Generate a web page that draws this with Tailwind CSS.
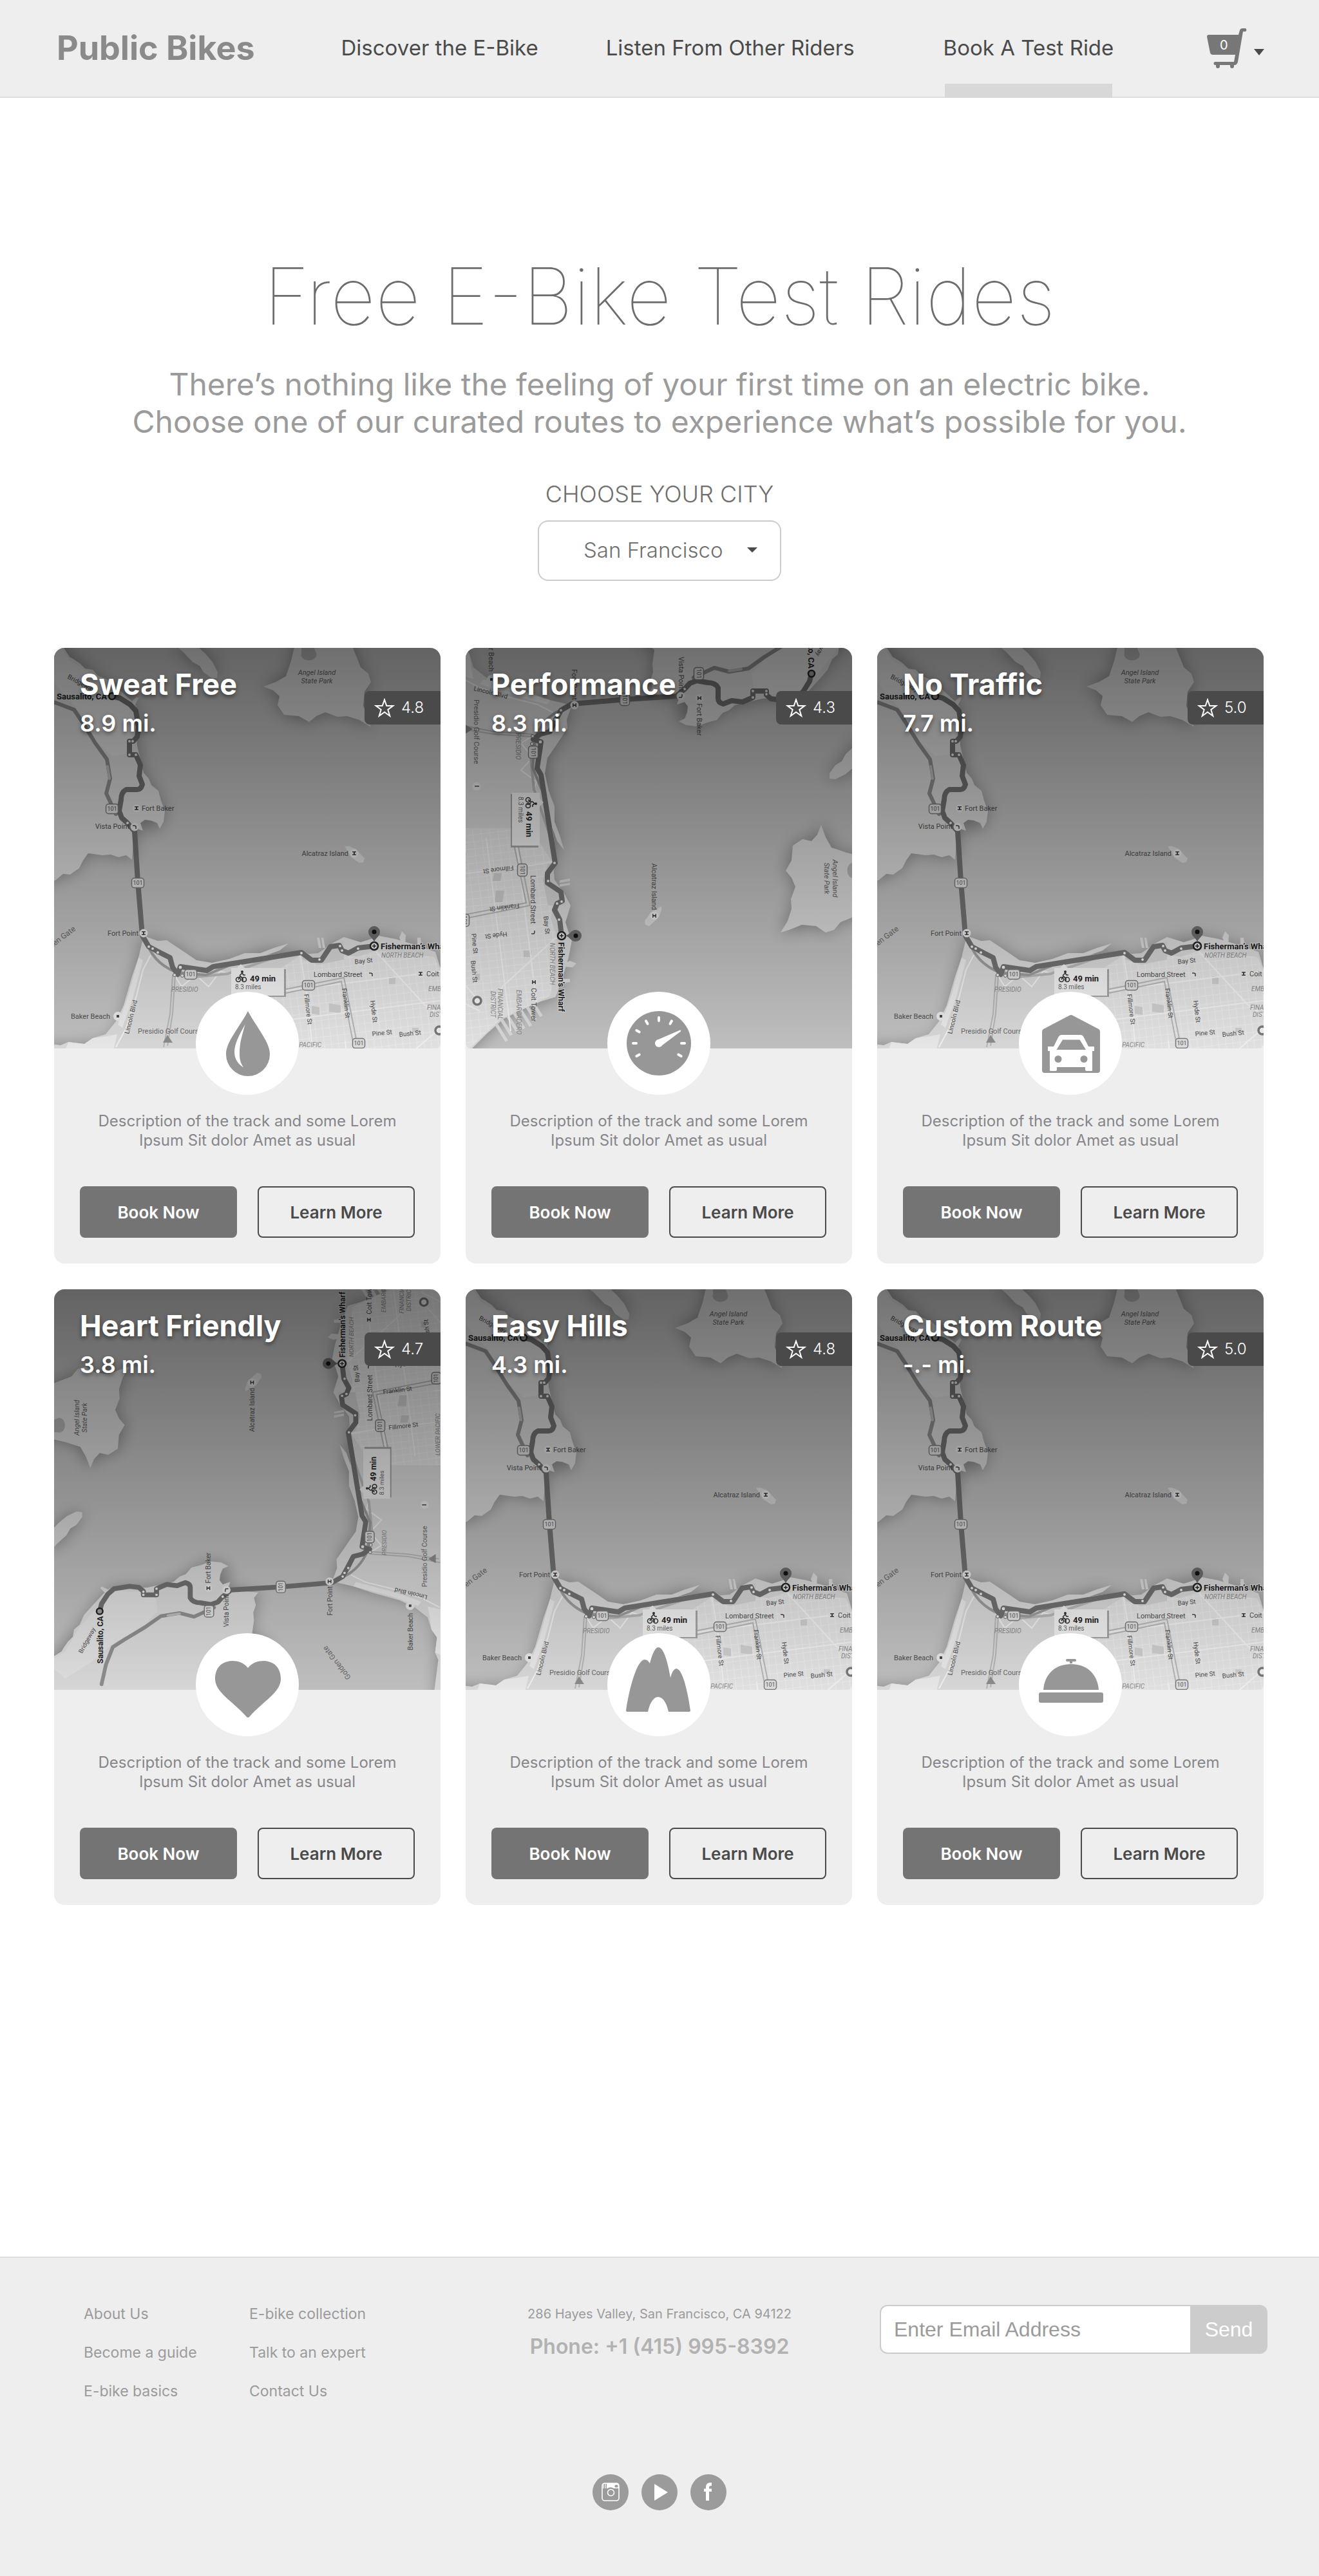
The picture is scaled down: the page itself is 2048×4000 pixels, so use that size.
<!DOCTYPE html>
<html lang="en">
<head>
<meta charset="utf-8">
<meta name="viewport" content="width=device-width, initial-scale=1">
<title>Public Bikes – Free E-Bike Test Rides</title>
<script src="https://cdn.jsdelivr.net/npm/@tailwindcss/browser@4"></script>
</head>
<body class="flex min-h-screen flex-col bg-white font-['Inter',sans-serif]">

<!-- Shared filters, patterns and the rating star -->
<svg class="absolute size-0" aria-hidden="true">
  <defs>
    <filter id="shore" x="-20%" y="-20%" width="140%" height="140%"><feGaussianBlur stdDeviation="12"/></filter>
    <pattern id="streets" width="11" height="13" patternUnits="userSpaceOnUse" patternTransform="rotate(-7)">
      <path d="M0 0H11M0 0V13" stroke="#ebebeb" stroke-width="1.6" fill="none"/>
    </pattern>
    <symbol id="star" viewBox="0 0 32 30"><path d="M16 2.500l3.300 9.500h10l-8 6 3 9.700-8.300-5.900-8.300 5.900 3-9.700-8-6h10z" fill="none" stroke="#fff" stroke-width="2"/></symbol>
    <symbol id="shield" viewBox="0 0 22 18"><rect x="1.500" y="1.500" width="19" height="15" rx="4" fill="#dcdcdc" stroke="#777" stroke-width="1.500"/></symbol>
  </defs>
</svg>

<!-- Route map artwork, copied into every card -->
<template id="map-art">
  <svg>
    <rect x="-60" y="-40" width="780" height="720" fill="#bebebe"/>
    <g filter="url(#shore)" fill="#000" opacity=".3">
      <path d="M188 0L215 22 239 43 253 47 251 26 235 9 219-10z"/>
      <path d="M372 3L364 39 325 60 349 74 347 89 357 104 396 115 421 100 455 106 492 123 482 68 492 53 476 30 464 0 455-24 380-24z"/>
      <path d="M15 0L68 43 121 83 131 106 129 152 139 194 151 213 166 237 172 253 164 281 129 281 121 329 88 321 53 319 39 342 2 361-60 365V-40H0z"/>
      <path d="M139 447L161 455 190 464 221 485 272 483 341 466 408 481 435 457 504 447 557 460 592 472 599 495 626 553 672 602 720 640V690H-60V612L10 617 47 615 80 611 96 594 108 569 121 518 131 481z"/>
    </g>
    <g fill="#d6d6d6">
      <path d="M188-4L200 6 215 22 226 28 232 38 245 47 253 47 254 38 246 22 235 9 224-1 219-10z"/>
      <path d="M372 3L368 20 360 44 344 53 325 60 340 66 350 75 347 89 357 104 380 106 396 115 407 106 421 100 440 107 455 106 474 112 492 123 488 110 480 90 482 68 492 53 488 40 476 30 464 0 455-24 380-24z"/>
      <path d="M451 308L458 308 468 312 482 327 480 333 474 334 461 325z"/>
      <path d="M0-40L15 0 24 14 31 18 40 24 48 32 60 34 68 43 84 50 98 62 121 83 128 76 131 78 125 90 131 106 127 120 129 152 139 194 147 203 151 213 162 222 166 237 172 253 170 270 164 281 160 272 150 268 141 267 134 272 138 284 129 281 124 290 121 329 112 322 100 325 88 321 75 322 53 319 45 330 39 342 25 352 14 351 2 361-60 370V-40z"/>
      <path d="M139 447L161 455 175 454 190 464 205 474 221 485 245 489 272 483 296 474 320 474 341 466 364 459 350 470 330 477 384 470 408 481 420 475 425 462 435 457 450 449 476 457 492 452 504 447 530 452 557 460 592 472 599 495 610 520 626 553 650 580 672 602 720 640V690H-60V608L-30 612 10 617 22 612 47 615 60 606 80 600 96 580 108 555 121 510 131 481z"/>
      <path d="M541 462L536 450 540 440 546 446 545 462zM564 464V450H569L571 466zM411 466L408 450H412L415 466zM417 466L415 450H418L421 466z"/>
      <g transform="rotate(-32 620 540)"><path d="M612 500h34v5h-34zM612 511h34v5h-34zM612 522h38v5h-38zM612 533h36v5h-36zM612 544h34v5h-34zM612 555h34v5h-34zM612 566h38v5h-38z"/></g>
    </g>
    <g fill="#e6e6e6">
      <path d="M5-10L24 20 60 40 105 78 128 90 122 120 122 150 110 165 90 168 60 140 40 100 5 60-20 20z" opacity=".45"/>
      <path d="M47 615L60 606 82 603 98 600 92 625 70 645H10L22 612z"/>
      <path d="M131 481L115 540 99 585 106 590 122 545 138 485z"/>
    </g>
    <path d="M384 8a12 9 0 1 0 22-2l-4-12-18 2z" fill="#b0b0b0"/>
    <path d="M330 512L384 476 404 486 440 472 470 480 500 470 545 475 590 480 600 500 625 556 690 625V680H330z" fill="#e0e0e0"/>
    <path d="M330 512L384 476 404 486 440 472 470 480 500 470 545 475 590 480 600 500 625 556 690 625V680H330z" fill="url(#streets)"/>
    <path d="M385 476l25-2 20-14 20-4v28l-40 8-24-8z" fill="#d0d0d0"/>
    <g fill="#cbcbcb"><path d="M427 552l18 3v12l-18-2zM400 556l12 2v12l-12-2zM520 510h10v12h-10zM556 590h10v7h-10z"/></g>
    <g fill="none" stroke="#eee" stroke-width="2">
      <path d="M150 477L138 500 128 540 112 590 96 620"/>
      <path d="M188 510l10 16 22-18 20 18 18-24 20 6"/>
      <path d="M382 476l10 60 12 110M500 472l75 82 30 20M600 590l-70 60M690 600L560 668M330 536l270-34M345 580l300-38"/>
      <path d="M452 610l4 40M584 650l30-60"/>
    </g>
    <g fill="none" stroke="#b3b3b3" stroke-width="2">
      <path d="M188 508l-4 60-8 50M184 508l-4 60-10 52"/>
      <path d="M360 530l90-18 22 110M360 536l86-18 20 104"/>
      <path d="M210 512l60-6 80-28" stroke-width="4"/>
    </g>
    <path d="M176 601l-7 12h15z" fill="#8a8a8a"/>

    <g fill="none" stroke-linejoin="round" stroke-linecap="round">
      <path d="M-30 78L2 85 31 96 43 114 64 148 82 173 87 203 81 226 96 258" stroke="#8c8c8c" stroke-width="6"/>
      <path d="M83 184L86 203" stroke="#b8b8b8" stroke-width="4"/>
      <path d="M147 466Q160 492 190 504L236 508 270 494" stroke="#999" stroke-width="4"/>
      <path d="M90 75L102 78 118 88 127 98 131 123 129 138 123 145H117V166H127L134 182 132 199 137 212Q135 220 129 220H112Q104 224 104 236L101 253 105 264 114 272 125 285 130 363 137 447 147 464 166 474 180 481 184 496 192 507 196 495 237 501 247 495 384 473 400 485H415L429 464 443 462 447 470 457 474 472 466 497 463" stroke="#6f6f6f" stroke-width="8"/>
    </g>
    <g fill="#e8e8e8" stroke="#666" stroke-width="1">
      <circle cx="117" cy="145" r="2.500"/><circle cx="122" cy="145" r="2.500"/><circle cx="117" cy="166" r="2.500"/><circle cx="127" cy="166" r="2.500"/><circle cx="114" cy="272" r="2.500"/>
      <circle cx="147" cy="464" r="2.500"/><circle cx="153" cy="467" r="2.500"/><circle cx="161" cy="473" r="2.500"/><circle cx="187" cy="508" r="2.500"/><circle cx="199" cy="509" r="2.500"/><circle cx="196" cy="496" r="3"/>
      <circle cx="384" cy="474" r="2.500"/><circle cx="412" cy="484" r="2.500"/><circle cx="444" cy="463" r="2.500"/><circle cx="447" cy="470" r="2.500"/><circle cx="472" cy="467" r="2.500"/>
    </g>
    <circle cx="90" cy="75" r="5" fill="#999" stroke="#222" stroke-width="2.500"/>

    <g fill="#e4e4e4" stroke="none">
      <circle cx="128" cy="249" r="6"/><circle cx="125" cy="278" r="6.500"/><circle cx="466" cy="319" r="6.500"/><circle cx="139" cy="443" r="6.500"/><circle cx="492" cy="507" r="5"/><circle cx="569" cy="506" r="6.500"/><circle cx="99" cy="572" r="7"/><circle cx="265" cy="595" r="6.500"/>
    </g>
    <path d="M125 246h6v1.500h-2v3h2v1.500h-6v-1.500h2v-3h-2zM463 316h6v1.500h-2v3h2v1.500h-6v-1.500h2v-3h-2zM136 440h6v1.500h-2v3h2v1.500h-6v-1.500h2v-3h-2zM566 503h6v1.500h-2v3h2v1.500h-6v-1.500h2v-3h-2zM97 570h4v4h-4zM264 591h1.500v7h-1.500z" fill="#444"/>
    <path d="M122 276h3l2 1v4M489 505h3l2 1v4" fill="none" stroke="#444" stroke-width="1.500"/>

    <g font-family="Roboto, sans-serif" font-size="9" fill="#555" text-anchor="middle">
      <use href="#shield" x="79" y="241" width="22" height="18"/><text x="90" y="253">101</text>
      <use href="#shield" x="119" y="356" width="22" height="18"/><text x="130" y="368">101</text>
      <use href="#shield" x="201" y="498" width="22" height="18"/><text x="212" y="510">101</text>
      <use href="#shield" x="384" y="515" width="22" height="18"/><text x="395" y="527">101</text>
      <use href="#shield" x="462" y="605" width="22" height="18"/><text x="473" y="617">101</text>
    </g>
    <circle cx="598" cy="594" r="6" fill="#eee" stroke="#777" stroke-width="3.500"/>

    <g font-family="Roboto, sans-serif" font-size="11" fill="#4d4d4d">
      <g font-style="italic" fill="#5d5d5d" text-anchor="middle">
        <text x="408" y="42">Angel Island</text><text x="408" y="55">State Park</text>
      </g>
      <text x="20" y="47" font-size="10" transform="rotate(28 20 47)">Bridgeway</text>
      <text x="82" y="80" font-size="13" font-weight="700" text-anchor="end" fill="#222">Sausalito, CA</text>
      <text x="136" y="253">Fort Baker</text>
      <text x="117" y="281" text-anchor="end">Vista Point</text>
      <text x="457" y="323" text-anchor="end">Alcatraz Island</text>
      <text x="131" y="447" text-anchor="end">Fort Point</text>
      <text x="34" y="438" text-anchor="end" font-size="12" fill="#666" transform="rotate(-37 34 438)">Golden Gate</text>
      <text x="467" y="491" font-size="10" transform="rotate(-6 467 491)">Bay St</text>
      <text x="403" y="511">Lombard Street</text>
      <text x="578" y="510">Coit Tower</text>
      <text x="26" y="576">Baker Beach</text>
      <text x="130" y="599" fill="#666">Presidio Golf Course</text>
      <text x="116" y="600" font-size="10" transform="rotate(-76 116 600)">Lincoln Blvd</text>
      <text x="388" y="538" font-size="10" transform="rotate(83 388 538)">Fillmore St</text>
      <text x="447" y="529" font-size="10" transform="rotate(83 447 529)">Franklin St</text>
      <text x="491" y="548" font-size="10" transform="rotate(83 491 548)">Hyde St</text>
      <text x="494" y="603" font-size="10" transform="rotate(-6 494 603)">Pine St</text>
      <text x="536" y="604" font-size="10" transform="rotate(-6 536 604)">Bush St</text>
      <g font-size="10" font-style="italic" fill="#8a8a8a">
        <text x="508" y="481">NORTH BEACH</text><text x="182" y="534">PRESIDIO</text><text x="581" y="533">EMBARCADERO</text>
        <text x="579" y="562">FINANCIAL</text><text x="583" y="573">DISTRICT</text><text x="346" y="620">LOWER PACIFIC</text>
      </g>
      <text x="507" y="468" font-size="13" font-weight="700" fill="#222" stroke="#ddd" stroke-width="2" paint-order="stroke">Fisherman’s Wharf</text>
    </g>
    <circle cx="497" cy="463" r="6" fill="#ddd" stroke="#222" stroke-width="2.500"/><path d="M494 463h6M497 460v6" stroke="#222" stroke-width="1.500"/>
    <path d="M497 458C496 450 488 449 488 441a9 9 0 0 1 18 0C506 449 498 450 497 458z" fill="#6a6a6a"/><circle cx="497" cy="441" r="3.500" fill="#111"/>

    <path d="M277 499h83v43h-83z" fill="#777" opacity=".6"/>
    <path d="M275 497H284L290 491 296 497H357V540H275z" fill="#ececec"/>
    <g fill="none" stroke="#333" stroke-width="1.600"><circle cx="286" cy="515" r="3.500"/><circle cx="295" cy="515" r="3.500"/><path d="M286 515l3-5 4 3v4M288 509l4-4 2 3h3"/></g><circle cx="292" cy="503" r="2" fill="#333"/>
    <text x="304" y="518" font-family="Roboto, sans-serif" font-size="13" font-weight="700" fill="#222">49 min</text>
    <text x="281" y="530" font-family="Roboto, sans-serif" font-size="10" fill="#666">8.3 miles</text>
  </svg>
</template>

<header class="flex h-[152px] items-center border-b-2 border-[#dedede] bg-[#eee] px-[84px]">
  <a href="#" class="ml-1 text-[52px] font-bold text-[#8a8a8a]">Public Bikes</a>
  <nav class="ml-[134px] flex items-center self-stretch text-[33px] text-[#4a4a4a]" aria-label="Main">
    <a href="#" class="mr-[105px]">Discover the E-Bike</a>
    <a href="#" class="mr-[138px]">Listen From Other Riders</a>
    <a href="#" class="relative flex items-center self-stretch" aria-current="page">Book A Test Ride
      <span class="absolute inset-x-0.5 -bottom-0.5 h-[22px] bg-[#d8d8d8]"></span></a>
  </nav>
  <button type="button" class="ml-auto mr-px flex items-center gap-2.5" aria-label="Shopping cart">
    <span class="relative">
      <svg class="h-[62px] w-[63px]" viewBox="0 0 63 62" fill="#777"><path d="M3 10H49L51 3Q52 0 55 0H60A3 3 0 0 1 60 5H56L48 52Q47 56 44 57H42V59A2.500 2.500 0 0 1 36 59V57H20V59A2.500 2.500 0 0 1 14 59V57H13A2.500 2.500 0 0 1 13 52H42L44 41H9Q6 41 5 38L0 13Q0 10 3 10z"/></svg>
      <span class="absolute left-5 top-3.5 text-[20px] leading-6 text-white">0</span>
    </span>
    <svg class="mt-3 h-2.5 w-4" viewBox="0 0 16 10" fill="#4a4a4a"><path d="M0 0H16L8 10z"/></svg>
  </button>
</header>

<main class="flex flex-col pt-[236px]">
  <h1 class="text-center text-[122px] leading-[144px] font-thin text-[#6c6c6c]">Free E-Bike Test Rides</h1>
  <p class="mt-9 text-center text-[48px] leading-[58px] text-[#9b9b9b]">There’s nothing like the feeling of your first time on an electric bike.<br>Choose one of our curated routes to experience what’s possible for you.</p>
  <label for="city" class="mt-[63px] text-center text-[36px] leading-10 font-light text-[#6f6f6f]">CHOOSE YOUR CITY</label>
  <div class="relative mx-auto mt-[21px] h-[94px] w-[378px]">
    <select id="city" class="size-full appearance-none rounded-2xl border-2 border-[#ccc] bg-white pl-[69px] text-[33px] font-light text-[#6f6f6f]"><option>San Francisco</option></select>
    <svg class="pointer-events-none absolute top-[42px] right-[37px] h-2 w-4" viewBox="0 0 16 8" fill="#4a4a4a"><path d="M0 0H16L8 8z"/></svg>
  </div>

  <section class="mt-[104px] grid grid-cols-3 gap-x-[39px] gap-y-10 pr-[86px] pl-[84px]" aria-label="Routes">

    <article class="relative overflow-hidden rounded-2xl bg-[#eee]">
      <div class="relative h-[622px]">
        <svg class="size-full" viewBox="0 0 600 622" preserveAspectRatio="xMidYMid slice"><g data-map></g></svg>
        <div class="absolute inset-0 bg-linear-to-b from-black/48 to-transparent"></div>
      </div>
      <div class="absolute top-[29px] left-10 text-white [text-shadow:0_3px_6px_rgba(0,0,0,0.5)]">
        <h2 class="text-[45px] leading-[56px] font-bold">Sweat Free</h2>
        <p class="mt-2.5 text-[36px] leading-[44px] font-semibold">8.9 mi.</p>
      </div>
      <div class="absolute top-[67px] right-0 flex h-[52px] w-[118px] items-center gap-2.5 rounded-l-lg bg-[#4a4a4a] pl-[15px] text-[24px] font-light text-white"><svg class="h-[30px] w-8"><use href="#star"/></svg>4.8</div>
      <div class="absolute top-[534px] left-1/2 size-40 -translate-x-1/2 rounded-full bg-white">
        <svg class="size-full" viewBox="0 0 160 160"><path d="M81 30C66 58 47 78 47 97a34 34 0 0 0 68 0C115 78 96 58 81 30z" fill="#979797"/><path d="M76.500 51C68 66 60 80 60 94c0 10 6 19 14 23.500C69 110 68 104 68 96c0-18 4-28 8.500-45z" fill="#fff"/></svg>
      </div>
      <p class="px-10 pt-[98px] text-center text-[24px] leading-[30px] text-[#86868b]">Description of the track and some Lorem<br>Ipsum Sit dolor Amet as usual</p>
      <div class="mx-10 mt-14 mb-10 grid grid-cols-2 gap-8 text-[26px] font-semibold">
        <button type="button" class="h-20 rounded-lg bg-[#747474] text-white">Book Now</button>
        <button type="button" class="h-20 rounded-lg border-2 border-[#4a4a4a] text-[#4a4a4a]">Learn More</button>
      </div>
    </article>

    <article class="relative overflow-hidden rounded-2xl bg-[#eee]">
      <div class="relative h-[622px]">
        <svg class="size-full" viewBox="0 0 600 622" preserveAspectRatio="xMidYMid slice"><g data-map transform="matrix(0 1 -1 0 612 -50)"></g></svg>
        <div class="absolute inset-0 bg-linear-to-b from-black/48 to-transparent"></div>
      </div>
      <div class="absolute top-[29px] left-10 text-white [text-shadow:0_3px_6px_rgba(0,0,0,0.5)]">
        <h2 class="text-[45px] leading-[56px] font-bold">Performance</h2>
        <p class="mt-2.5 text-[36px] leading-[44px] font-semibold">8.3 mi.</p>
      </div>
      <div class="absolute top-[67px] right-0 flex h-[52px] w-[118px] items-center gap-2.5 rounded-l-lg bg-[#4a4a4a] pl-[15px] text-[24px] font-light text-white"><svg class="h-[30px] w-8"><use href="#star"/></svg>4.3</div>
      <div class="absolute top-[534px] left-1/2 size-40 -translate-x-1/2 rounded-full bg-white">
        <svg class="size-full" viewBox="0 0 160 160"><circle cx="80" cy="80" r="50" fill="#979797"/>
          <g stroke="#fff" stroke-width="4" stroke-linecap="round"><path d="M80 40v5"/><path d="M80 40v5" transform="rotate(30 80 80)"/><path d="M80 40v5" transform="rotate(-30 80 80)"/><path d="M80 40v5" transform="rotate(-60 80 80)"/><path d="M80 40v5" transform="rotate(-90 80 80)"/><path d="M80 40v5" transform="rotate(90 80 80)"/><path d="M80 40v5" transform="rotate(120 80 80)"/><path d="M80 40v5" transform="rotate(-120 80 80)"/></g>
          <path d="M77 75L113 59.500Q115 60 114 61.500L84 84z" fill="#fff"/><circle cx="80" cy="80" r="6" fill="#fff"/></svg>
      </div>
      <p class="px-10 pt-[98px] text-center text-[24px] leading-[30px] text-[#86868b]">Description of the track and some Lorem<br>Ipsum Sit dolor Amet as usual</p>
      <div class="mx-10 mt-14 mb-10 grid grid-cols-2 gap-8 text-[26px] font-semibold">
        <button type="button" class="h-20 rounded-lg bg-[#747474] text-white">Book Now</button>
        <button type="button" class="h-20 rounded-lg border-2 border-[#4a4a4a] text-[#4a4a4a]">Learn More</button>
      </div>
    </article>

    <article class="relative overflow-hidden rounded-2xl bg-[#eee]">
      <div class="relative h-[622px]">
        <svg class="size-full" viewBox="0 0 600 622" preserveAspectRatio="xMidYMid slice"><g data-map></g></svg>
        <div class="absolute inset-0 bg-linear-to-b from-black/48 to-transparent"></div>
      </div>
      <div class="absolute top-[29px] left-10 text-white [text-shadow:0_3px_6px_rgba(0,0,0,0.5)]">
        <h2 class="text-[45px] leading-[56px] font-bold">No Traffic</h2>
        <p class="mt-2.5 text-[36px] leading-[44px] font-semibold">7.7 mi.</p>
      </div>
      <div class="absolute top-[67px] right-0 flex h-[52px] w-[118px] items-center gap-2.5 rounded-l-lg bg-[#4a4a4a] pl-[15px] text-[24px] font-light text-white"><svg class="h-[30px] w-8"><use href="#star"/></svg>5.0</div>
      <div class="absolute top-[534px] left-1/2 size-40 -translate-x-1/2 rounded-full bg-white">
        <svg class="size-full" viewBox="0 0 160 160"><path d="M79 36.500Q81 35.500 83 36.500L124 58Q126 59 126 62V122Q126 126 122 126H40Q36 126 36 122V62Q36 59 38 58z" fill="#979797"/>
          <path d="M66 67H96Q99 67 101 71L108 85H117V92H114V122Q114 123 113 123H105Q103 123 103 121V117H59V121Q59 123 57 123H49Q48 123 48 122V92H45V85H54L61 71Q63 67 66 67z" fill="#fff"/>
          <path d="M68 74.500H94.500L104 90H58.500z" fill="#979797"/><circle cx="61" cy="104.500" r="5.500" fill="#979797"/><circle cx="101" cy="104.500" r="5.500" fill="#979797"/></svg>
      </div>
      <p class="px-10 pt-[98px] text-center text-[24px] leading-[30px] text-[#86868b]">Description of the track and some Lorem<br>Ipsum Sit dolor Amet as usual</p>
      <div class="mx-10 mt-14 mb-10 grid grid-cols-2 gap-8 text-[26px] font-semibold">
        <button type="button" class="h-20 rounded-lg bg-[#747474] text-white">Book Now</button>
        <button type="button" class="h-20 rounded-lg border-2 border-[#4a4a4a] text-[#4a4a4a]">Learn More</button>
      </div>
    </article>

    <article class="relative overflow-hidden rounded-2xl bg-[#eee]">
      <div class="relative h-[622px]">
        <svg class="size-full" viewBox="0 0 600 622" preserveAspectRatio="xMidYMid slice"><g data-map transform="matrix(0 -0.945 0.97 0 -2 585)"></g></svg>
        <div class="absolute inset-0 bg-linear-to-b from-black/48 to-transparent"></div>
      </div>
      <div class="absolute top-[29px] left-10 text-white [text-shadow:0_3px_6px_rgba(0,0,0,0.5)]">
        <h2 class="text-[45px] leading-[56px] font-bold">Heart Friendly</h2>
        <p class="mt-2.5 text-[36px] leading-[44px] font-semibold">3.8 mi.</p>
      </div>
      <div class="absolute top-[67px] right-0 flex h-[52px] w-[118px] items-center gap-2.5 rounded-l-lg bg-[#4a4a4a] pl-[15px] text-[24px] font-light text-white"><svg class="h-[30px] w-8"><use href="#star"/></svg>4.7</div>
      <div class="absolute top-[534px] left-1/2 size-40 -translate-x-1/2 rounded-full bg-white">
        <svg class="size-full" viewBox="0 0 160 160"><path d="M81 54C75 46 66 43 56 43C38 44 30 56 30 71C30 92 58 106 78 129Q81 133 84 129C104 106 132 92 132 71C132 56 124 44 106 43C96 43 87 46 81 54z" fill="#979797"/></svg>
      </div>
      <p class="px-10 pt-[98px] text-center text-[24px] leading-[30px] text-[#86868b]">Description of the track and some Lorem<br>Ipsum Sit dolor Amet as usual</p>
      <div class="mx-10 mt-14 mb-10 grid grid-cols-2 gap-8 text-[26px] font-semibold">
        <button type="button" class="h-20 rounded-lg bg-[#747474] text-white">Book Now</button>
        <button type="button" class="h-20 rounded-lg border-2 border-[#4a4a4a] text-[#4a4a4a]">Learn More</button>
      </div>
    </article>

    <article class="relative overflow-hidden rounded-2xl bg-[#eee]">
      <div class="relative h-[622px]">
        <svg class="size-full" viewBox="0 0 600 622" preserveAspectRatio="xMidYMid slice"><g data-map></g></svg>
        <div class="absolute inset-0 bg-linear-to-b from-black/48 to-transparent"></div>
      </div>
      <div class="absolute top-[29px] left-10 text-white [text-shadow:0_3px_6px_rgba(0,0,0,0.5)]">
        <h2 class="text-[45px] leading-[56px] font-bold">Easy Hills</h2>
        <p class="mt-2.5 text-[36px] leading-[44px] font-semibold">4.3 mi.</p>
      </div>
      <div class="absolute top-[67px] right-0 flex h-[52px] w-[118px] items-center gap-2.5 rounded-l-lg bg-[#4a4a4a] pl-[15px] text-[24px] font-light text-white"><svg class="h-[30px] w-8"><use href="#star"/></svg>4.8</div>
      <div class="absolute top-[534px] left-1/2 size-40 -translate-x-1/2 rounded-full bg-white">
        <svg class="size-full" viewBox="0 0 160 160"><path d="M31 122Q29 122 29 120C34 86 46 41 58 41Q63 41 66 47C69 34 74 22 79 22C88 22 94 46 98 69Q102 55 107 55C117 55 125 92 129 120Q129 122 127 122H95C92 108 86 99 79 99C72 99 66 108 63 122z" fill="#979797"/></svg>
      </div>
      <p class="px-10 pt-[98px] text-center text-[24px] leading-[30px] text-[#86868b]">Description of the track and some Lorem<br>Ipsum Sit dolor Amet as usual</p>
      <div class="mx-10 mt-14 mb-10 grid grid-cols-2 gap-8 text-[26px] font-semibold">
        <button type="button" class="h-20 rounded-lg bg-[#747474] text-white">Book Now</button>
        <button type="button" class="h-20 rounded-lg border-2 border-[#4a4a4a] text-[#4a4a4a]">Learn More</button>
      </div>
    </article>

    <article class="relative overflow-hidden rounded-2xl bg-[#eee]">
      <div class="relative h-[622px]">
        <svg class="size-full" viewBox="0 0 600 622" preserveAspectRatio="xMidYMid slice"><g data-map></g></svg>
        <div class="absolute inset-0 bg-linear-to-b from-black/48 to-transparent"></div>
      </div>
      <div class="absolute top-[29px] left-10 text-white [text-shadow:0_3px_6px_rgba(0,0,0,0.5)]">
        <h2 class="text-[45px] leading-[56px] font-bold">Custom Route</h2>
        <p class="mt-2.5 text-[36px] leading-[44px] font-semibold">-.- mi.</p>
      </div>
      <div class="absolute top-[67px] right-0 flex h-[52px] w-[118px] items-center gap-2.5 rounded-l-lg bg-[#4a4a4a] pl-[15px] text-[24px] font-light text-white"><svg class="h-[30px] w-8"><use href="#star"/></svg>5.0</div>
      <div class="absolute top-[534px] left-1/2 size-40 -translate-x-1/2 rounded-full bg-white">
        <svg class="size-full" viewBox="0 0 160 160" fill="#979797"><rect x="73" y="40" width="16" height="4" rx="2"/><rect x="79" y="43" width="4" height="4"/><path d="M38 88C40 62 58 48 81 48S122 62 124 88z"/><rect x="31" y="92" width="100" height="16" rx="3"/></svg>
      </div>
      <p class="px-10 pt-[98px] text-center text-[24px] leading-[30px] text-[#86868b]">Description of the track and some Lorem<br>Ipsum Sit dolor Amet as usual</p>
      <div class="mx-10 mt-14 mb-10 grid grid-cols-2 gap-8 text-[26px] font-semibold">
        <button type="button" class="h-20 rounded-lg bg-[#747474] text-white">Book Now</button>
        <button type="button" class="h-20 rounded-lg border-2 border-[#4a4a4a] text-[#4a4a4a]">Learn More</button>
      </div>
    </article>
  </section>
</main>

<footer class="mt-[546px] border-t-2 border-[#dedede] bg-[#eee] px-20 pt-[71px] pb-[102px] text-[#9b9b9b]">
  <div class="grid grid-cols-[1fr_auto_1fr]">
    <nav class="grid grid-cols-[257px_auto] content-start justify-start gap-y-7 pl-[50px] text-[23px] leading-8" aria-label="Footer">
      <a href="#">About Us</a><a href="#">E-bike collection</a>
      <a href="#">Become a guide</a><a href="#">Talk to an expert</a>
      <a href="#">E-bike basics</a><a href="#">Contact Us</a>
    </nav>
    <address class="text-center not-italic">
      <p class="text-[20px] leading-8">286 Hayes Valley, San Francisco, CA 94122</p>
      <p class="mt-[15px] text-[32px] leading-10 font-semibold text-[#b2b2b2]">Phone: +1 (415) 995-8392</p>
    </address>
    <form class="mt-0.5 flex h-[76px] w-[602px] justify-self-end font-['Liberation_Sans',sans-serif] text-[32px]">
      <input type="email" aria-label="Email address" placeholder="Enter Email Address" class="min-w-0 flex-1 rounded-l-xl border-2 border-r-0 border-[#ccc] bg-white pl-5 placeholder:text-[#9b9b9b]">
      <button type="button" class="w-[120px] rounded-r-xl bg-[#ccc] text-white">Send</button>
    </form>
  </div>
  <div class="mt-[113px] flex justify-center gap-5">
    <a href="#" aria-label="Instagram"><svg class="size-14" viewBox="0 0 56 56"><circle cx="28" cy="28" r="28" fill="#9b9b9b"/><rect x="15" y="14" width="26" height="27" rx="4" fill="none" stroke="#fff" stroke-width="1.600"/><path d="M22 14H37Q41 14 41 18V22H33A9 9 0 0 0 23 22H22z" fill="#fff"/><path d="M17 15V22M20 14V22" stroke="#fff" stroke-width="1.200"/><rect x="34.500" y="16.500" width="5" height="4" rx="1.500" fill="#9b9b9b"/><circle cx="28.500" cy="28.500" r="7.500" fill="#9b9b9b"/><circle cx="28.500" cy="28.500" r="5" fill="none" stroke="#fff" stroke-width="1.600"/></svg></a>
    <a href="#" aria-label="YouTube"><svg class="size-14" viewBox="0 0 56 56"><circle cx="28" cy="28" r="28" fill="#9b9b9b"/><path d="M20 15L41 28 20 41z" fill="#fff"/></svg></a>
    <a href="#" aria-label="Facebook"><svg class="size-14" viewBox="0 0 56 56"><circle cx="28" cy="28" r="28" fill="#9b9b9b"/><path d="M24 41V27H21V22.500H24V20Q24 13 31 13H33V18H31.500Q29 18 29 20.500V22.500H33V27H29V41z" fill="#fff"/></svg></a>
  </div>
</footer>

<script>
  const art = document.getElementById('map-art').content.querySelector('svg');
  document.querySelectorAll('[data-map]').forEach(g => {
    for (const node of art.children) g.appendChild(node.cloneNode(true));
  });
</script>
</body>
</html>
